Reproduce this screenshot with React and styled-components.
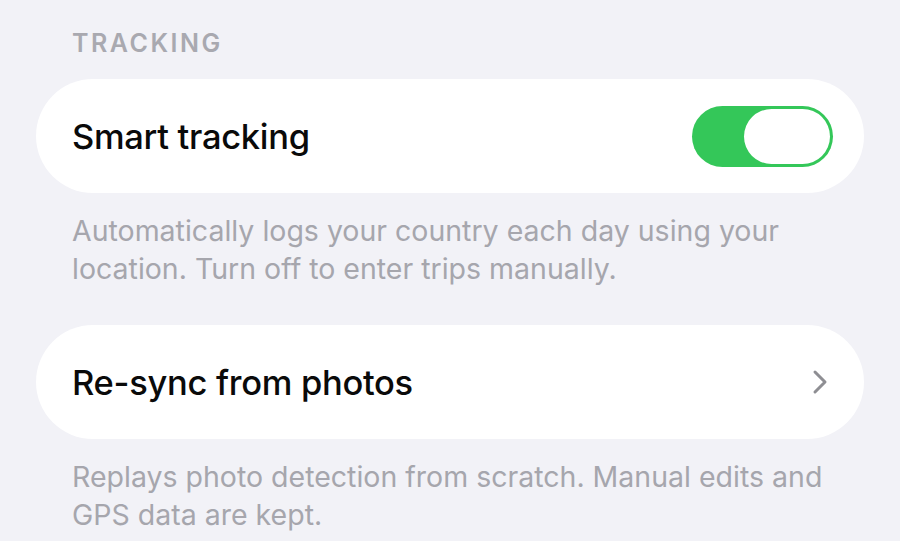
import styled, { createGlobalStyle } from "styled-components";

const GlobalStyle = createGlobalStyle`
  html, body {
    margin: 0;
    padding: 0;
    background: #f2f2f7;
  }
  body {
    font-family: Inter, "Noto Sans", sans-serif;
    -webkit-font-smoothing: antialiased;
  }
`;

const Page = styled.div`
  width: 900px;
  height: 541px;
  overflow: hidden;
  box-sizing: border-box;
  padding: 28px 36px 0;
  display: flex;
  flex-direction: column;
`;

const SectionTitle = styled.div`
  font-size: 25px;
  font-weight: 600;
  letter-spacing: 2.5px;
  color: #a9a9b0;
  padding-left: 36px;
  line-height: 30px;
  margin-bottom: 21px;
  flex-shrink: 0;
`;

const Card = styled.div`
  flex-shrink: 0;
  background: #ffffff;
  border-radius: 57px;
  height: 114px;
  box-sizing: border-box;
  padding: 0 31px 0 36px;
  display: flex;
  align-items: center;
  justify-content: space-between;
`;

const Label = styled.div`
  font-size: 34.5px;
  font-weight: 500;
  color: #0a0a0a;
  letter-spacing: -0.3px;
`;

const Note = styled.p`
  flex-shrink: 0;
  margin: 19px 0 37px;
  padding: 0 36px;
  font-size: 28.5px;
  line-height: 38px;
  font-weight: 400;
  color: #a6a6ad;
`;

const Toggle = styled.div`
  width: 141px;
  height: 61px;
  border-radius: 31px;
  background: #34c759;
  box-sizing: border-box;
  padding: 3px;
  display: flex;
  justify-content: ${(p) => (p.$on ? "flex-end" : "flex-start")};
`;

const Knob = styled.div`
  width: 86px;
  height: 55px;
  border-radius: 28px;
  background: #ffffff;
`;

const ChevronIcon = styled.svg`
  margin-right: 5px;
  flex-shrink: 0;
`;

const Chevron = () => (
  <ChevronIcon width="16" height="26" viewBox="0 0 16 26" fill="none">
    <path
      d="M3 3 L13 13 L3 23"
      stroke="#8e8e93"
      strokeWidth="3"
      strokeLinecap="round"
      strokeLinejoin="round"
    />
  </ChevronIcon>
);

export default function App() {
  return (
    <>
      <GlobalStyle />
      <Page>
        <SectionTitle>TRACKING</SectionTitle>
        <Card>
          <Label>Smart tracking</Label>
          <Toggle $on>
            <Knob />
          </Toggle>
        </Card>
        <Note>
          Automatically logs your country each day using your location. Turn
          off to enter trips manually.
        </Note>
        <Card>
          <Label>Re-sync from photos</Label>
          <Chevron />
        </Card>
        <Note>
          Replays photo detection from scratch. Manual edits and GPS data are
          kept.
        </Note>
      </Page>
    </>
  );
}
